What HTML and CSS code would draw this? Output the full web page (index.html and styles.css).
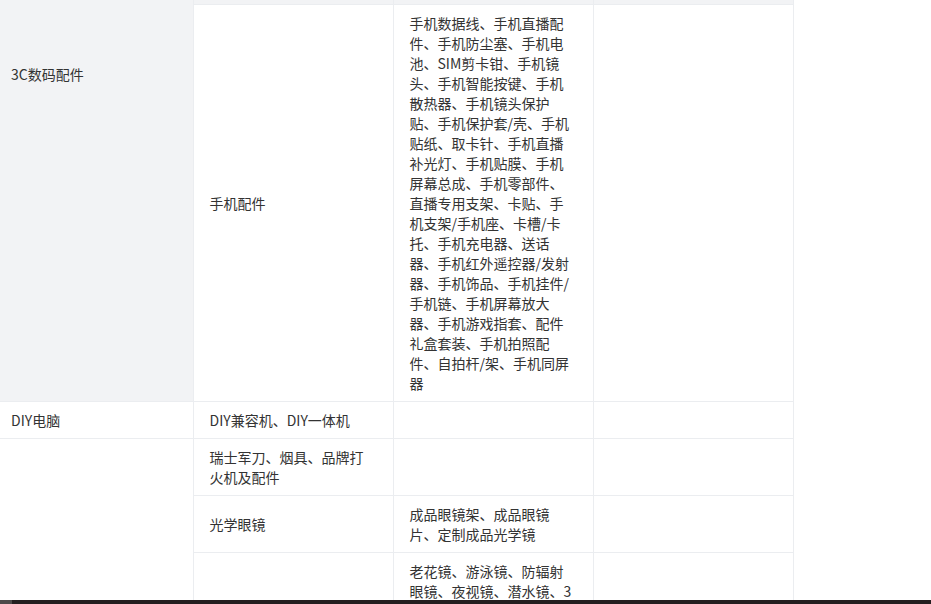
FILE: index.html
```html
<!DOCTYPE html>
<html lang="zh-CN">
<head>
    <meta charset="UTF-8">
    <meta name="viewport" content="width=device-width, initial-scale=1.0">
    <title>类目表</title>
    <link rel="stylesheet" href="styles.css">
</head>
<body>

    <div class="viewport">
        <table class="cat-table">
            <colgroup>
                <col class="c1">
                <col class="c2">
                <col class="c3">
                <col class="c4">
            </colgroup>
            <tbody>
                <!-- 当前悬停行（已滚出视口上方） -->
                <tr class="row-hover row-tall">
                    <td class="first" rowspan="2">3C数码配件</td>
                    <td></td>
                    <td></td>
                    <td></td>
                </tr>
                <tr>
                    <td>手机配件</td>
                    <td>手机数据线、手机直播配件、手机防尘塞、手机电池、SIM剪卡钳、手机镜头、手机智能按键、手机散热器、手机镜头保护贴、手机保护套/壳、手机贴纸、取卡针、手机直播补光灯、手机贴膜、手机屏幕总成、手机零部件、直播专用支架、卡贴、手机支架/手机座、卡槽/卡托、手机充电器、送话器、手机红外遥控器/发射器、手机饰品、手机挂件/手机链、手机屏幕放大器、手机游戏指套、配件礼盒套装、手机拍照配件、自拍杆/架、手机同屏器</td>
                    <td></td>
                </tr>
                <tr>
                    <td class="first">DIY电脑</td>
                    <td>DIY兼容机、DIY一体机</td>
                    <td></td>
                    <td></td>
                </tr>
                <tr>
                    <td class="first" rowspan="7">服饰配件</td>
                    <td>瑞士军刀、烟具、品牌打火机及配件</td>
                    <td></td>
                    <td></td>
                </tr>
                <tr>
                    <td>光学眼镜</td>
                    <td>成品眼镜架、成品眼镜片、定制成品光学镜</td>
                    <td></td>
                </tr>
                <tr>
                    <td>功能眼镜</td>
                    <td>老花镜、游泳镜、防辐射眼镜、夜视镜、潜水镜、3D眼镜、护目镜、太阳眼镜、滑雪镜、眼镜配件、眼镜盒、眼镜布、眼镜链</td>
                    <td></td>
                </tr>
                <tr>
                    <td>手表</td>
                    <td>国产腕表、瑞士腕表、日韩腕表、欧美腕表</td>
                    <td></td>
                </tr>
                <tr>
                    <td>钱包卡包</td>
                    <td>钱包、卡包、证件套</td>
                    <td></td>
                </tr>
                <tr>
                    <td>腰带皮带</td>
                    <td>男士腰带、女士腰带、腰链、腰封</td>
                    <td></td>
                </tr>
                <tr>
                    <td>帽子围巾</td>
                    <td>棒球帽、渔夫帽、针织帽、围巾、丝巾、披肩</td>
                    <td></td>
                </tr>
            </tbody>
        </table>
    </div>

    <div class="bottom-bar">
        <div class="bar-start"></div>
    </div>

</body>
</html>
```

FILE: styles.css
```css
body {
    margin: 0;
    height: 604px;
    overflow: hidden;
    background-color: #fff;
    color: #333;
    font-family: "Noto Sans CJK SC", sans-serif;
    font-size: 14px;
}

.viewport {
    height: 600px;
    overflow: hidden;
}

/* 表格已向下滚动，上一行只露出底部 4px */
.cat-table {
    margin-top: -255px;
    width: 793px;
    table-layout: fixed;
    border-collapse: collapse;
}

.c1 { width: 193px; }
.c2 { width: 200px; }
.c3 { width: 200px; }
.c4 { width: 200px; }

.cat-table td {
    padding: 8px 16px;
    border: 1px solid #ebedf0;
    line-height: 20px;
    vertical-align: middle;
    word-break: break-all;
}

.cat-table td.first {
    border-left: none;
    padding-left: 11px;
}

.row-tall td {
    height: 242px;
}

.row-hover td {
    background-color: #f2f3f5;
}

.bottom-bar {
    display: flex;
    height: 4px;
    background-color: #241f20;
}

.bar-start {
    width: 12px;
    background-color: #4d4a4a;
}
```
